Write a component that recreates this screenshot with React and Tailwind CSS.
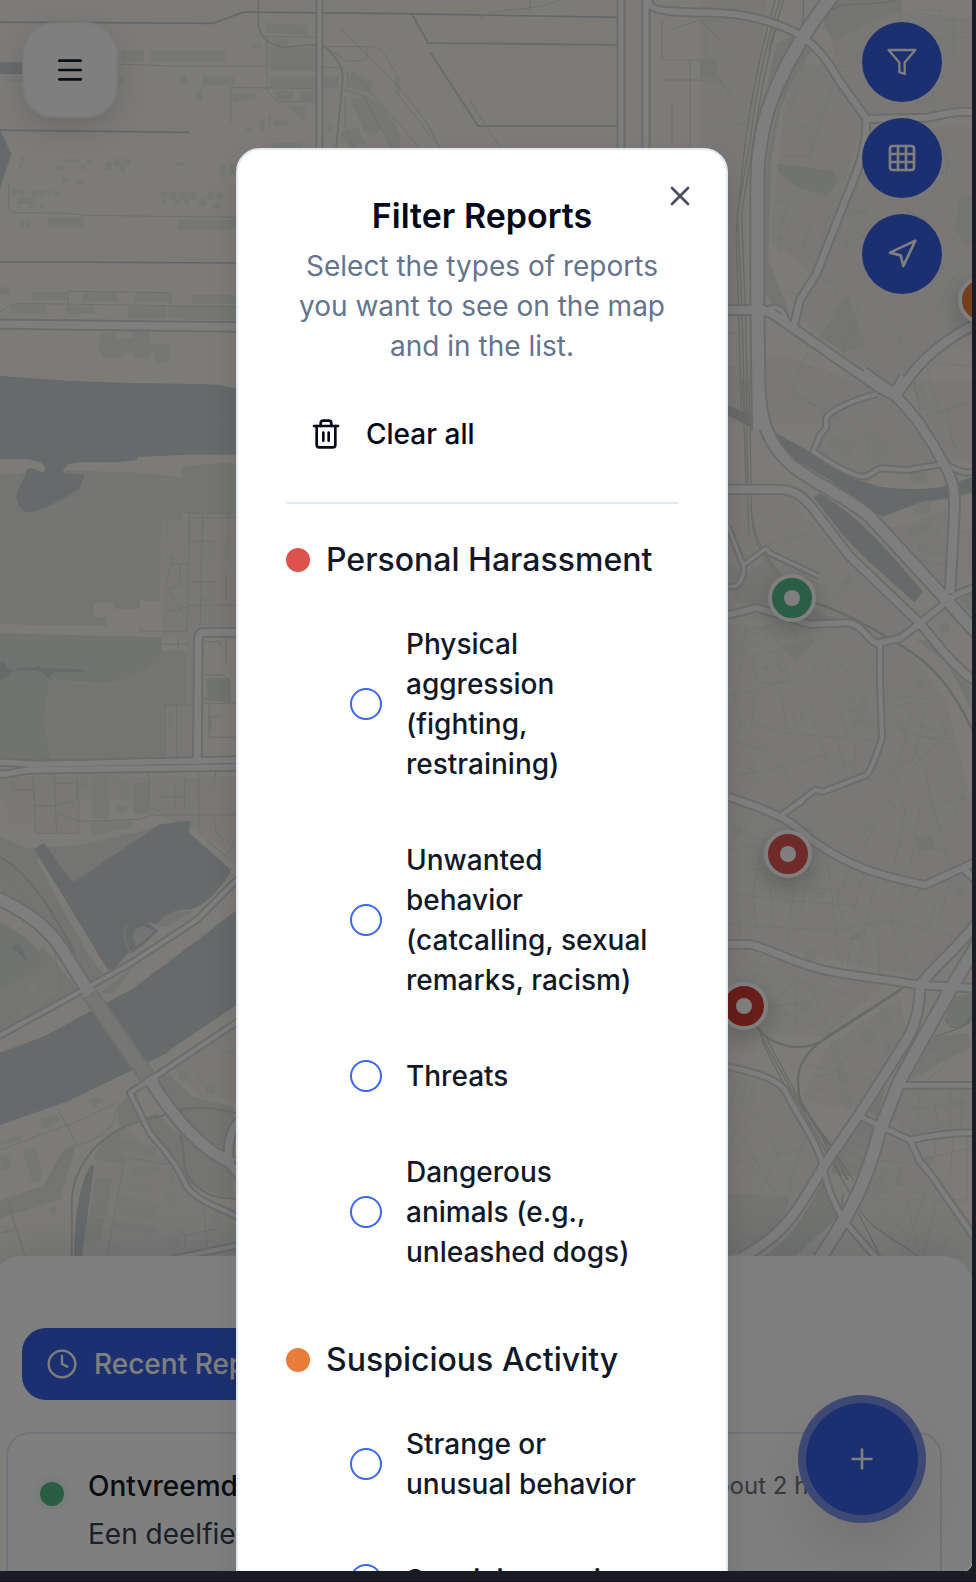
import { Clock, Grid3x3, Menu, Navigation, Plus, Trash2, X } from "lucide-react";

/* Each map tile is drawn in its own coordinates, three units to a pixel. */
const tiles = {
  nw: "translate(0 0) scale(.33333)",
  n: "translate(0 0)",
  ne: "translate(700 0) scale(.33333)",
  w: "translate(0 380) scale(.33333)",
  sw: "translate(0 780) scale(.33333)",
  e: "translate(720 380) scale(.33333)",
  se: "translate(720 800) scale(.33333)",
};

const WATER = "#ccd4d7";
const GREEN = "#e8eae4";
const PARK = "#e1e6e0";
const URBAN = "#f2f1ed";
const BUILDING = "#ececea";

const areas = [
  ["nw", WATER, "M-30 187H70V222H-30Z M-30 392H2L34 462L0 565H-30Z M-30 1128H0C100 1140 250 1145 400 1150L650 1155L710 1168V1260H-30Z"],
  ["ne", URBAN, "M0 0H200L170 300L110 640V930H0Z M300 190L440 200L490 360L430 560L340 820L210 720L250 330Z M400 110L600 30L840 60V340L500 345L400 200Z M500 380H840V950L590 1170L300 960L340 840Z M230 1060L560 1180L640 1270H84V1100Z"],
  ["ne", GREEN, "M390 0H605V30L570 45L480 80L400 125L370 75Z M310 120L340 140L270 260L240 330L215 480L205 780L265 930L250 960L195 880V600C195 450 230 300 310 120Z M0 180H50V235H0Z M840 580L780 590L765 690L800 735H840Z M230 130L290 100L200 260Z M440 880L498 1040L430 1058L360 1010Z"],
  ["ne", PARK, "M230 490L400 512L416 540L380 588L290 560L232 515Z"],
  ["w", GREEN, "M-30 285L190 272L390 276L545 292V262L640 250H710V398H548V420H484L480 662H420V686H340V670H282V711H320V738L-30 732Z M-30 760L485 772V813H560L575 1135L-30 1140Z"],
  ["w", "#ebece7", "M-30 290L190 275L390 280L470 290L505 305C470 340 460 380 430 405C400 430 350 425 320 390C290 355 240 360 180 410L90 540L60 600V732H-30Z"],
  ["w", URBAN, "M484 420H548L568 400H710V735L600 740L575 1135H494V980H560V780L484 770Z M0 1190H710V1260H0Z"],
  ["w", PARK, "M-30 760L485 772V813L440 862C380 900 330 915 260 905L150 900C150 950 130 1000 140 1060L160 1140H-30Z M620 895H690V962H620Z"],
  ["w", WATER, "M-30 -12H0L240 5C400 10 640 12 650 14L710 26V224H560L415 231L410 240L350 247H240L205 252L188 272L195 280L254 284L238 328C200 350 150 380 100 396C70 400 55 385 48 350C50 335 70 300 82 268C95 262 110 268 125 277L135 272C137 258 130 250 115 245L80 237H-30Z"],
  ["w", WATER, "M10 843L30 872L80 860L104 864L112 855L125 864L240 868L262 875L160 877L146 898L130 880L100 870L40 872L20 890L0 905V850Z"],
  ["sw", URBAN, "M100 0H235V160H104Z M450 0H710V240L600 150L450 100Z M0 10H100V130H30Z M370 1040L500 1140L560 1240L710 1320V1430H240L290 1150Z M520 860L710 740V960L600 950Z"],
  ["sw", GREEN, "M0 168L80 205L240 195L400 160L530 123H575L560 160L240 340L130 190L110 240L250 500L310 580L240 625C180 500 120 430 0 330Z M400 10H448V100H400Z M0 720V770L240 640L180 560L130 500L0 600Z M300 640L400 560L340 640Z M480 860L580 950L700 980V1110L620 1090L540 1000L460 900Z M350 980L410 940L450 1060C480 1090 540 1150 560 1210L700 1260V1170C600 1110 530 1060 470 1000L400 1030C330 1050 290 1100 280 1140L370 1150L360 1060Z M0 1270L130 1220L190 1110L230 1090L180 1260L0 1315Z M440 430L520 390L580 395L500 440Z"],
  ["sw", PARK, "M-30 425H0C60 455 110 495 135 545L90 580L10 625L-30 640Z"],
  ["sw", GREEN, "M285 1195H335L322 1305L270 1310Z M265 1308L315 1315L300 1380L255 1385Z"],
  ["sw", WATER, "M102 208L132 188L212 300L225 304L480 133L570 122L568 158L693 270L690 280C650 340 610 380 570 390C530 386 500 395 470 432L440 425L475 452L430 495L400 516L385 520L340 568L322 568L175 325Z M35 500L58 492L82 542Z M275 1152L282 1160L246 1430H222C225 1300 240 1200 275 1152Z"],
  ["sw", WATER, "M-30 830L0 818L130 770L400 625L620 460L710 390V675L515 806L500 820L440 850L200 965L0 1035L-30 1045Z"],
  ["sw", GREEN, "M398 470Q400 440 430 440Q450 442 462 456L435 478L408 500Z"],
  ["e", URBAN, "M24 340L200 340L390 560L590 740L480 800L300 740L24 720Z M24 730L270 740L400 740L470 795L560 800L680 960L740 1200V1330H24Z M330 100L470 50L520 60L650 240L480 270L430 285L290 215Z M560 0H770V250L690 240Z M540 440L690 380V620L660 640L490 440Z"],
  ["e", GREEN, "M24 560L70 560L60 610L24 620Z M50 600L150 530L190 650L110 680L40 660Z M250 680L380 725L270 730Z M590 780L680 850L760 1000V930L620 780Z M180 800L300 770L230 850Z M720 660L768 720V620Z"],
  ["e", WATER, "M24 75L104 112V148L24 106Z M155 152L270 215C340 270 400 300 480 320C560 330 640 330 680 316L768 288V335L680 356C640 362 620 362 600 368L490 410C460 400 380 340 330 300L210 230Z M280 352L300 340C400 400 480 480 608 635L583 667C500 590 400 510 350 440Z M225 318L262 342L255 350L222 328Z"],
  ["se", URBAN, "M24 0H768V180L615 240L400 190L200 60Z M24 50L180 60L270 130L610 260L768 200V360L600 530L24 420Z M24 440L500 550L310 710L130 700L24 500Z M24 820L180 860L300 1100L180 1300L24 1340Z M550 870H768V990L570 1010L520 960Z M480 1010L570 1030L768 1340V1380H560L420 1230Z M320 740L540 590L560 700L400 930L240 900Z"],
  ["se", GREEN, "M640 710L740 700L760 740L640 800L570 840Z M24 1180L210 1190L180 1300L24 1370Z M500 870H550L520 970Z M440 925L500 860L470 960Z M380 420L440 380L420 420Z M330 1120L400 950L470 985L420 1130Z M590 110H640V150H590Z"],
  ["se", PARK, "M310 1140L355 1250L220 1375H120C200 1330 240 1270 310 1140Z M675 655L700 590L768 580V640C750 690 690 700 675 655Z"],
];

const buildings = [
  ["nw", "M363 152H432V185H363Z M452 152H676V186H452Z M606 230H702V255H606Z M540 225H560V252H540Z M588 270H607V302H588Z M812 146H947V212H812Z M810 230H1016V262H810Z M798 68L924 76V104L798 98Z M820 115H862V138H820Z M830 270H880V300H830Z M902 272H942V302H902Z M858 316L915 318V362L890 345Z M820 362H866V378H820Z M818 428H907V445H818Z M697 282L760 280L772 296L700 305Z M1055 212L1118 245L1112 280L1045 262Z M1050 300L1100 288L1150 320L1170 360L1120 410L1090 390Z M1140 370L1175 360L1200 400V445H1170Z M1020 400L1070 380L1100 430L1050 445Z M145 652H250V682H145Z M534 659H710V690H534Z M93 876H198V901H93Z M248 879H353V904H248Z M403 880H512V906H403Z M34 914H136V940H34Z M205 917H285V942H205Z M385 917H500V956H385Z M505 917H710V960H560L505 950Z M577 885H710V910H577Z M52 592H107V612H52Z M228 544H256V552H228Z M186 532H205V546H186Z M305 1002L345 995V1015H400V995H450V1030L510 1035V1085L465 1090V1060H450V1075H400V1060H370V1075H310L295 1045Z M780 362H795V390H780Z M805 345H812V382H805Z M738 380H756V392H738Z M985 365H997V395H985Z M524 490L552 486V497H524Z M0 862H28V885H0Z M18 237H66V245H18Z M660 496H676V530H660Z M690 490H710V525H690Z M352 232H374V250H352Z M758 132H787V146H758Z M1185 230L1200 240V290L1186 262Z"],
  ["nw", "M341 487a12 12 0 1 0 24 0a12 12 0 1 0-24 0 M369 487a12 12 0 1 0 24 0a12 12 0 1 0-24 0 M314 498a12 12 0 1 0 24 0a12 12 0 1 0-24 0 M359 507a9 9 0 1 0 18 0a9 9 0 1 0-18 0 M505 587a13 13 0 1 0 26 0a13 13 0 1 0-26 0 M535 587a13 13 0 1 0 26 0a13 13 0 1 0-26 0 M565 587a13 13 0 1 0 26 0a13 13 0 1 0-26 0 M483 583a9 9 0 1 0 18 0a9 9 0 1 0-18 0 M483 606a9 9 0 1 0 18 0a9 9 0 1 0-18 0 M596 606a12 12 0 1 0 24 0a12 12 0 1 0-24 0 M619 587a12 12 0 1 0 24 0a12 12 0 1 0-24 0 M648 587a12 12 0 1 0 24 0a12 12 0 1 0-24 0 M638 617a12 12 0 1 0 24 0a12 12 0 1 0-24 0 M523 607a9 9 0 1 0 18 0a9 9 0 1 0-18 0 M552 607a9 9 0 1 0 18 0a9 9 0 1 0-18 0 M93 580a9 9 0 1 0 18 0a9 9 0 1 0-18 0 M116 580a9 9 0 1 0 18 0a9 9 0 1 0-18 0 M139 580a9 9 0 1 0 18 0a9 9 0 1 0-18 0 M162 580a9 9 0 1 0 18 0a9 9 0 1 0-18 0 M34 576a9 9 0 1 0 18 0a9 9 0 1 0-18 0 M56 576a9 9 0 1 0 18 0a9 9 0 1 0-18 0 M192 482a7 7 0 1 0 14 0a7 7 0 1 0-14 0 M209 482a7 7 0 1 0 14 0a7 7 0 1 0-14 0 M225 482a7 7 0 1 0 14 0a7 7 0 1 0-14 0 M164 502a7 7 0 1 0 14 0a7 7 0 1 0-14 0 M181 502a7 7 0 1 0 14 0a7 7 0 1 0-14 0 M242 503a7 7 0 1 0 14 0a7 7 0 1 0-14 0 M62 480a7 7 0 1 0 14 0a7 7 0 1 0-14 0 M55 498a7 7 0 1 0 14 0a7 7 0 1 0-14 0 M260 482a7 7 0 1 0 14 0a7 7 0 1 0-14 0 M82 623a7 7 0 1 0 14 0a7 7 0 1 0-14 0 M98 623a7 7 0 1 0 14 0a7 7 0 1 0-14 0 M48 623a7 7 0 1 0 14 0a7 7 0 1 0-14 0 M120 623a7 7 0 1 0 14 0a7 7 0 1 0-14 0 M60 673a7 9 0 1 0 14 0a7 9 0 1 0-14 0 M78 673a7 9 0 1 0 14 0a7 9 0 1 0-14 0"],
  ["w", "M494 430H505V480H494Z M512 430H523V455H512Z M542 430H552V445H542Z M625 490H634V530H625Z M672 490H680V540H672Z M620 622H627V660H620Z M610 692H635V710H610Z M240 1185H262V1226H240Z M277 1185H327V1260H277Z M340 1190H360V1215H340Z M362 1208H386V1232H362Z M505 990H520V1050H505Z M540 990H550V1035H540Z M625 1010H635V1060H625Z M550 1195H600V1210H550Z"],
  ["sw", "M277 0H327V116H277Z M348 76H380V97H348Z M270 122H400V142L330 155L275 165Z M364 40H388V62H364Z M120 1020L172 1002L180 1025L128 1048Z M68 1110L108 1102L128 1200L98 1212Z M0 1122L28 1130L34 1165L5 1172Z M365 1080L420 1078V1112L368 1118Z M428 1092L470 1100L462 1135L428 1130Z M378 1202L458 1216L452 1240L374 1228Z M358 1246L480 1268L472 1320L350 1302Z M345 1320L468 1342L462 1366L340 1346Z M500 1228L526 1232L520 1278L498 1272Z M506 1160L525 1165L520 1210L505 1205Z M532 882L562 868L572 895L545 910Z M585 870L600 885L610 915L590 890Z M60 680L82 668L86 695L66 712Z M80 620L112 605L118 632L88 640Z M110 650L160 612L168 640L120 680Z M265 960L290 948L310 965L280 980Z M0 1085L66 1066V1078L0 1098Z M148 1282L168 1275L172 1300L152 1308Z M330 1398L360 1400L355 1430H328Z M495 1370L535 1375L540 1410L515 1405Z M390 1155L480 1160V1180L400 1190Z M640 1290L665 1295V1330L640 1325Z M595 1378H615V1400H595Z"],
  ["e", "M560 450L630 420V450L560 470Z M570 275H620V312L575 310Z M580 380L630 360L636 395L580 410Z M345 165L410 190L380 230L325 195Z M455 185L515 190L510 220L475 245L455 220Z M580 900L595 885L618 915L602 930Z M655 740L680 725L690 750L665 765Z M240 990H254V1030H240Z M590 500L610 480L640 510L600 520Z M380 580L410 600L380 630L360 610Z M640 455L655 445V480H645Z M205 85L215 78L222 88L212 95Z M310 110L350 95L360 120L320 140Z M380 950L405 940L410 965L385 975Z M420 945L440 940L445 965L425 970Z M380 985L440 970L445 995L385 1005Z M390 1020L440 1005L445 1030L395 1040Z M130 840L140 838L150 880L140 882Z M165 835L175 832L190 875L180 880Z"],
  ["se", "M390 1000L445 1015L440 1035L388 1020Z M385 1030L435 1048L430 1066L380 1050Z M375 1062L425 1082L420 1100L370 1082Z M40 850L55 846L40 910L28 905Z M65 860L82 858L66 920L54 915Z M90 870L105 868L92 925L80 920Z M470 640L500 620L520 660L490 680Z M420 700L460 680L470 720L430 740Z M240 600L275 605L265 645L235 635Z M30 70L60 65L70 100L40 110Z M705 262L735 255L738 285L708 290Z M350 830L380 810L390 840L360 855Z M610 760L640 750L650 790L620 800Z M280 270L320 275L310 300L280 295Z M600 1080L640 1070L645 1090L610 1100Z M700 900L730 895V925H702Z M450 1150L480 1130L500 1160L470 1180Z M520 1130L550 1120L555 1150L530 1160Z M255 440L290 450L280 500L250 490Z M500 720L515 740L500 765L485 745Z"],
];

/* [tile, stroke, width, path] */
const lines = [
  ["nw", "#c6cfd3", 5, "M-30 66L640 70L730 36L1200 41L1860 52 M-30 390L568 397 M-30 785L710 789"],
  ["nw", "#d8d8d6", 5, "M775 0V70C780 120 820 142 860 142C900 138 940 130 970 138C1010 170 1030 200 1028 240L1008 445"],
  ["nw", "#dededb", 3, "M352 192L520 198L801 199 M690 262L945 266 M692 262V368 M801 110V275L835 306L945 304 M785 108L945 112 M975 140H1120C1150 145 1160 170 1200 245 M1100 142V175Q1080 186 1040 182L980 145 M1035 270L1090 288L1175 445 M1035 290V380L1060 445 M970 200L1025 205C1050 220 1050 240 1035 270 M26 552V628Q28 638 40 638L200 640L260 646L710 652 M0 935L46 910L710 920 M203 942V874L512 878V917"],
  ["n", "#d6d6d4", 2, "M412 14L428 43L622 45 M430 52L478 126H619"],
  ["n", "#dfdfdc", 1, "M478 20C500 4 530 14 560 0 M340 28C370 60 420 100 440 148 M395 90L440 148 M360 80L420 148 M500 148L470 100 M530 0V12 M662 20V60H700 M662 80H720L735 100 M670 30L700 20L720 40 M672 100V148 M690 60V148"],
  ["ne", "#d6d6d3", 4, "M240 0C200 120 170 260 150 430L112 640L125 900L135 1270 M250 0C215 120 185 260 165 390L125 640L135 900L145 1270 M225 0C190 120 160 250 135 430L108 700L115 900L125 1270 M205 150L250 0 M310 0C312 50 310 80 298 100"],
  ["ne", "#d6d6d3", 4, "M590 0C540 15 470 10 430 15C390 20 370 60 340 90"],
  ["ne", "#e2e2df", 2, "M0 372H130L150 340 M60 372V430 M0 60H60L90 50V0 M15 60V180H60L72 150 M0 210L60 240L130 190 M60 240V372 M270 330L310 200L400 235 M290 270L370 300 M255 370L330 385L390 300 M280 415L340 430 M250 470H330V430 M325 480L400 250 M395 110L470 90L490 150L450 200L400 200 M450 130L520 250 M420 180L480 130 M520 100L640 70 M600 0V60 M640 30H720V60H830 M640 90V300 M700 100V330 M740 180V300L640 310 M640 120L830 110 M760 40V180 M720 390L740 480L800 580 M740 480V590L600 540 M510 590L560 700 M530 560L470 700 M560 590L800 740 M650 620L780 690 M430 720L640 1090 M500 730L790 900 M470 700L830 870 M640 700L480 900L430 1060 M700 700L560 940 M760 740L590 1040 M810 740L680 1000 M220 610L330 580L400 600L350 780L260 750 M240 640V760 M270 600L240 690 M300 590L260 700 M350 600L310 740 M220 710L400 760 M400 600L480 640L430 740L500 700 M430 640L510 630 M370 840L420 850L360 980 M250 870L350 900 M320 1060L270 1180L390 1240 M320 1060L400 1130L350 1200 M500 1080L580 1160 M640 1140L660 1240 M680 1100L720 1240L830 1190 M700 1090L830 1100 M84 1000H110V1100H84 M400 1240L470 1200L520 1270"],
  ["w", "#dededb", 3, "M548 400H710 M568 400L562 754H422V742 M608 404L600 742 M568 413H710 M570 484H645 M685 400V540H708 M570 606H645 M564 676H710 M498 525L520 532L498 610L538 685L560 680 M515 552H565 M540 552V612L508 630 M500 680L510 694H530L545 685 M605 660H632 M678 575V660 M610 785H660V800 M678 775V850 M612 885H670L690 900V965L630 960L612 955 M494 976H575 M496 976V1132 M530 978V1132 M610 970H710 M628 965V1072H710 M660 1010H632 M490 793H565 M534 775V810 M36 1190V1230H100 M101 1185V1260 M163 1180V1210H230 M230 1182V1260 M446 1178V1260 M596 1165V1260 M650 1165L640 1220"],
  ["w", "#ecefe8", 5, "M160 895C200 915 260 905 330 916C380 910 430 880 475 862 M150 900C150 950 130 1000 140 1060L160 1140"],
  ["w", "#d2d9db", 2, "M0 118L150 122L350 114L700 122"],
  ["sw", "#dededb", 3, "M100 0L106 160H236V0 M163 0L170 160 M104 78H165L230 58 M170 98L236 124L420 118L450 105H710 M446 10V80L480 95 M480 50H566 M554 0V85 M524 18V82 M596 0V140C600 170 640 200 710 250 M640 110L650 160L700 195L680 225 M0 1110L200 1035L178 995 M200 1035L225 1085 M200 1040L350 968 M0 1265L125 1222C170 1180 170 1120 230 1098C330 1060 340 1040 345 1000C350 980 370 965 390 950 M22 1262L75 1430 M0 1360L45 1348 M320 1430L375 1132L500 1152L515 1140 M610 1280L622 1400 M535 1350L555 1368L655 1345 M555 1368V1400 M622 920H638V935H622Z M675 820L710 800"],
  ["sw", "#d6d6d3", 6, "M215 1430V1260C225 1130 330 1030 480 1010C560 970 640 980 710 1000 M0 230C100 290 160 400 225 520 M540 1060C560 1130 540 1170 580 1210C620 1250 660 1255 710 1256"],
  ["sw", "#e3e6e0", 5, "M380 435C370 460 372 490 395 520 M162 365L240 480L270 570 M0 240C30 310 100 380 150 440L185 640"],
  ["sw", "#dce2e3", 2, "M0 858L105 995"],
  ["e", "#d6d6d3", 4, "M68 0L78 310 M78 0L86 465 M88 0L94 380C95 460 110 520 180 590 M92 380C100 460 120 520 190 590"],
  ["e", "#d2d2d0", 7, "M180 590L290 670C380 700 450 740 540 795C640 850 700 930 768 1070"],
  ["e", "#e1e1de", 2, "M240 0L215 35L310 90L340 60 M320 100L460 180H560L620 150 M460 180L520 60 M400 90L455 170 M445 185V225L480 260 M380 60L400 110 M580 0L610 110L768 60 M600 0L620 80 M680 90L700 200L768 150 M690 180L740 230 M540 430L620 520H690 M490 445L600 540L690 560 M720 450L750 460V560L768 600 M110 470L190 400L210 380 M120 500L270 460 M150 540L240 430 M190 560L310 480 M220 590L330 500 M270 600L360 520 M350 660L390 590L470 640L420 730 M230 580L350 640L300 720 M24 770L200 720 M24 800L150 740 M24 830L210 745 M60 870L80 730 M100 830L110 910L210 905L180 810L90 830 M110 870L190 850 M120 700L180 790 M200 720L290 880 M250 740L330 870 M300 760L400 900 M350 740L450 860 M290 910L400 830 M330 950L480 850 M350 950L380 1060L470 1030 M24 950L110 930L330 860 M40 930L60 1040 M24 1010L200 1060L470 1080 M110 930L90 1060L160 1130 M180 910L200 1060 M210 960L230 1040 M270 960L290 1060 M24 1080L130 1110L210 1200 M80 1140L170 1300 M120 1130L60 1200 M170 1130L230 1250 M24 1190L150 1170L330 1120L430 1180 M300 1070L330 1190 M350 1070L380 1190 M410 1080L400 1180 M500 960L560 950L640 960 M500 980L580 970L560 1060L530 1170 M500 1030L700 1100 M520 1000L620 1180L700 1120 M540 900L570 950 M620 970L580 1140L520 1160 M640 970L680 1060L560 1180 M600 1040L700 1060 M600 1070L710 1080 M440 1185L530 1290 M480 1140L600 1280L768 1250 M520 1160L560 1310 M620 1180L640 1310 M640 1160L740 1220L700 1310 M650 1200L768 1280"],
  ["se", "#e1e1de", 2, "M24 80L130 120L100 270 M24 150L140 130 M60 40L150 250L230 260 M130 120L240 100 M90 210L240 190 M24 280L200 300L440 320 M100 280L110 390 M50 290L60 400 M150 250L160 380 M230 190L200 440 M230 260L350 270L430 240 M280 130L230 400 M320 160L350 410 M350 270L370 380 M24 370L100 380L360 390 M390 200L350 300 M430 220L400 340 M470 230L440 360 M360 390L510 360L700 410 M510 365L590 540 M440 370L420 500 M400 400L380 500 M470 370L480 520 M560 250L510 365 M600 260L540 380 M660 280L620 400 M690 240L650 390 M530 380L680 480 M340 430L370 500 M330 100L390 130L460 80 M400 30L450 90L560 130 M480 40L430 150 M500 0L600 130L700 160 M560 20L520 210 M600 30L570 210 M640 20L690 200 M620 60L768 120 M280 10L400 80 M60 470L130 500L230 540L410 590 M130 500L40 600 M227 540L230 700 M227 540L150 620L240 610 M260 540L330 690 M410 590L330 690 M100 600L330 700 M24 560L200 660 M330 720L385 930 M345 720L395 930 M250 790L490 850 M270 830L350 820L380 760 M280 860L400 910 M360 740L500 830 M24 980L140 940L250 1000 M50 980L24 1060 M60 1000L190 1230 M130 960L220 1180 M200 1000L110 1200 M24 1090L300 1040 M24 1150L100 1100L220 1240 M260 1000L160 1300 M550 940L580 1000 M560 900L640 980L740 950 M600 880L590 1000 M640 890L660 1000 M690 870V990 M730 870L720 990 M560 930L768 900 M600 830L660 770 M620 840L690 790 M590 810L640 850 M600 1080L768 1040 M640 1010L650 1090 M700 1000L690 1130L650 1160 M740 1000V1200 M460 1190L540 1150L600 1180 M440 1200L768 1200 M470 1080L560 1090 M500 1100L490 1150 M540 1100L530 1160 M480 1220L620 1370 M560 1200L600 1370 M620 1170L560 1330 M650 1200L610 1370 M560 1330L730 1230 M700 1200L768 1290 M700 1300L650 1370 M400 1140L440 1200 M430 1150L500 1120 M24 1330L200 1290"],
  ["se", "#d2d2d0", 7, "M110 680C150 740 250 760 310 720L545 568 M310 720C220 780 230 850 240 900L300 1000L340 1050"],
  ["se", "#d2d2d0", 4, "M315 712L550 562 M120 700L230 900L390 1180 M135 705L240 905L300 1000L365 1130 M125 720L190 850 M230 900L330 1030L380 1140 M245 910L400 1140 M330 1040L385 1140 M360 1250L370 1180 M420 1230C460 1300 540 1320 600 1375 M415 1240L485 1375"],
  ["se", "#d6d6d3", 4, "M640 710C700 690 740 690 768 640 M675 655C690 700 745 690 752 640"],
];

/* [tile, width of the carriageway, path] */
const roads = [
  ["nw", 12, "M958 -10V450"],
  ["nw", 22, "M-30 972L710 981"],
  ["n", 5, "M650 -5C645 8 655 10 672 11L702 13 M646 0V148 M621 0V148"],
  ["ne", 18, "M-100 34L0 38C100 36 200 50 300 105C380 160 400 220 430 260L500 357L680 353C730 345 780 325 840 342"],
  ["ne", 18, "M499 360C500 450 470 520 440 590L350 820L300 900L282 975"],
  ["ne", 12, "M200 930Q245 905 260 965"],
  ["ne", 24, "M84 930H190L215 940L540 1165L590 1190L665 1275"],
  ["ne", 24, "M590 1185C640 1110 690 1040 840 965"],
  ["ne", 36, "M395 -10C330 70 270 170 230 260C190 350 172 450 172 560V920L177 1290"],
  ["w", 20, "M720 757H615Q596 757 595 776L592 1150"],
  ["w", 16, "M-30 1147H20L100 1153L710 1140"],
  ["w", 16, "M-30 1182H20L90 1170L710 1161"],
  ["sw", 12, "M-30 783L240 635L400 545L590 420L720 290"],
  ["sw", 12, "M720 720L480 880L390 938L450 1060C500 1120 530 1150 560 1220C600 1270 660 1280 720 1315"],
  ["sw", 12, "M520 1436L720 1395"],
  ["sw", 22, "M688 1150C680 1100 690 1050 720 1020 M688 1150L720 1190"],
  ["sw", 34, "M-30 345C100 400 160 460 200 530L262 630"],
  ["sw", 32, "M450 900C520 1010 600 1110 700 1150"],
  ["e", 12, "M470 42C400 60 330 90 318 115V145L300 165L280 215C330 250 400 290 430 290C455 290 460 265 490 265L560 270L670 252C710 265 720 285 768 275"],
  ["e", 10, "M24 440L70 555L138 505L150 520L295 588 M70 555C75 580 60 620 40 620H24"],
  ["e", 16, "M24 705L110 683L270 733L385 728C430 735 440 780 470 790L540 775L600 730L680 665C710 635 740 635 768 620"],
  ["e", 12, "M480 790V900L486 1075C470 1120 460 1160 440 1185L310 1235L285 1230L185 1305"],
  ["e", 22, "M24 328H180C220 330 240 345 270 375L390 530L600 730C650 790 700 860 768 905"],
  ["e", 20, "M520 40L550 -10"],
  ["e", 26, "M430 -25L520 40C580 100 630 170 670 250C710 310 703 360 703 400L690 640"],
  ["e", 32, "M115 -20C118 120 140 190 220 260C300 320 380 350 450 410L680 660L770 760"],
  ["se", 18, "M24 -10L110 20L180 50C220 70 240 90 275 120C400 210 500 230 615 255L768 185 M730 205L768 240"],
  ["se", 12, "M185 45L250 0"],
  ["se", 20, "M24 433H90C160 450 240 500 360 520L500 540L600 555L768 565"],
  ["se", 14, "M24 800C120 820 170 840 195 870C250 980 290 1020 310 1100C320 1170 350 1220 370 1260L470 1375"],
  ["se", 14, "M535 856H768"],
  ["se", 14, "M420 950L570 1020C640 1005 700 998 768 998 M570 1020L600 1085L630 1120L768 1320"],
  ["se", 26, "M768 370C720 440 650 490 600 555C600 620 590 670 560 720L420 940L310 1100C220 1260 180 1310 60 1375"],
  ["se", 34, "M780 420L690 570L540 840L480 990C430 1180 380 1250 300 1375"],
];

function CityMap() {
  return (
    <svg
      className="absolute inset-0 h-full w-full"
      viewBox="-10 0 984 1571"
      preserveAspectRatio="xMidYMin slice"
      fill="none"
      strokeLinejoin="round"
      aria-hidden="true"
    >
      <rect x="-10" width="1000" height="1600" fill="#f8f6f1" />
      {areas.map(([tile, fill, d], i) => (
        <path key={i} transform={tiles[tile]} fill={fill} d={d} />
      ))}
      {buildings.map(([tile, d], i) => (
        <path key={i} transform={tiles[tile]} fill={BUILDING} d={d} />
      ))}
      {lines.map(([tile, stroke, width, d], i) => (
        <path key={i} transform={tiles[tile]} stroke={stroke} strokeWidth={width} d={d} />
      ))}
      {roads.map(([tile, width, d], i) => (
        <path key={i} transform={tiles[tile]} stroke="#d8d8d6" strokeWidth={tile === "n" ? width + 4 : width + 12} d={d} />
      ))}
      {roads.map(([tile, width, d], i) => (
        <path key={i} transform={tiles[tile]} stroke="#fdfdfd" strokeWidth={width} d={d} />
      ))}
      <g transform={tiles.sw}>
        <path d="M268 640L445 895" stroke="#e0e0de" strokeWidth="52" />
        <path d="M272 646L440 888" stroke="#ededeb" strokeWidth="40" />
        <path d="M255 620L270 642 M448 893L462 912" stroke="#fdfdfd" strokeWidth="34" />
        <path d="M420 920L500 867" stroke="#fdfdfd" strokeWidth="12" />
      </g>
    </svg>
  );
}

function Marker({ label, className }) {
  return (
    <button
      type="button"
      aria-label={label}
      className={`absolute flex size-12 items-center justify-center rounded-full border-4 border-white shadow-[0_8px_24px_rgba(0,0,0,0.22)] ${className}`}
    >
      <span className="size-4 rounded-full bg-white" />
    </button>
  );
}

function FunnelIcon() {
  return (
    <svg className="size-8" viewBox="0 0 24 24" fill="none" stroke="currentColor" strokeWidth="1.75" strokeLinejoin="round" aria-hidden="true">
      <path d="M22 3H2l8 9.46V19.6l4 1.4v-8.54Z" />
    </svg>
  );
}

function MapButton({ label, children }) {
  return (
    <button type="button" aria-label={label} className="flex size-20 items-center justify-center rounded-full bg-[#3861e2] text-white">
      {children}
    </button>
  );
}

const categories = [
  {
    name: "Personal Harassment",
    dot: "bg-[#de524c]",
    types: [
      "Physical aggression (fighting, restraining)",
      "Unwanted behavior (catcalling, sexual remarks, racism)",
      "Threats",
      "Dangerous animals (e.g., unleashed dogs)",
    ],
  },
  {
    name: "Suspicious Activity",
    dot: "bg-[#e87c38]",
    types: ["Strange or unusual behavior", "Suspicious noises"],
  },
];

function Category({ name, dot, types }) {
  return (
    <fieldset>
      <legend className="flex items-center gap-4 text-[32px] leading-[48px] font-medium whitespace-nowrap text-[#111827]">
        <span className={`size-6 shrink-0 rounded-full ${dot}`} />
        {name}
      </legend>
      <div className="flex flex-col gap-14 pt-10 pr-6 pl-16">
        {types.map((type) => (
          <label key={type} className="flex items-center gap-6 text-[28px] leading-10 font-medium text-[#111827]">
            <input
              type="checkbox"
              className="size-8 shrink-0 appearance-none rounded-full border-2 border-[#3b66ea] bg-white checked:bg-[#3b66ea]"
            />
            {type}
          </label>
        ))}
      </div>
    </fieldset>
  );
}

function ReportsSheet() {
  return (
    <section className="absolute inset-x-0 bottom-0 h-[315px] overflow-hidden rounded-t-[32px] bg-white px-4 pt-18 shadow-[0_-8px_48px_rgba(15,40,70,0.12)]">
      <div className="px-4">
        <button type="button" className="flex h-18 items-center gap-4 rounded-3xl bg-[#3861e2] px-6 text-[28px] font-medium whitespace-nowrap text-white">
          <Clock className="size-8" strokeWidth={1.75} />
          Recent Reports
        </button>
      </div>
      <article className="mt-8 mr-4 flex h-60 gap-6 rounded-3xl border-2 border-[#e2e8f0] px-8 pt-8">
        <span className="mt-4 size-6 shrink-0 rounded-full bg-[#56ba86] shadow-[0_0_12px_rgba(86,186,134,0.3)]" />
        <div className="min-w-0 flex-1">
          <div className="flex items-center justify-between">
            <h3 className="text-[28px] leading-10 font-medium text-[#111827]">Ontvreemding</h3>
            <time className="text-2xl leading-10 text-[#6b7280]">about 2 hours ago</time>
          </div>
          <p className="mt-2 text-[28px] leading-10 text-[#374151]">Een deelfiets</p>
        </div>
      </article>
    </section>
  );
}

function FilterDialog() {
  return (
    <div
      role="dialog"
      aria-modal="true"
      aria-labelledby="filter-title"
      aria-describedby="filter-description"
      className="relative w-[492px] max-w-full rounded-t-3xl border-2 border-[#e2e8f0] bg-white p-12 shadow-[0_16px_30px_rgba(0,0,0,0.12)]"
    >
      <button type="button" aria-label="Close" className="absolute top-[30px] right-[30px] text-[#4d515c]">
        <X className="size-8" strokeWidth={2} />
      </button>
      <header className="flex flex-col gap-3 text-center">
        <h2 id="filter-title" className="text-[34px] leading-9 font-semibold text-[#020817]">Filter Reports</h2>
        <p id="filter-description" className="text-[28px] leading-10 text-[#64748b]">
          Select the types of reports you want to see on the map and in the list.
        </p>
      </header>
      <button type="button" className="mt-8 flex h-18 items-center gap-6 px-6 text-[28px] font-medium text-[#020817]">
        <Trash2 className="size-8" strokeWidth={2} />
        Clear all
      </button>
      <hr className="mt-8 border-t-2 border-[#e2e8f0]" />
      <form className="mt-8 flex flex-col gap-16">
        {categories.map((category) => (
          <Category key={category.name} {...category} />
        ))}
      </form>
    </div>
  );
}

export default function App() {
  return (
    <div className="h-screen overflow-hidden border-b border-[#150f1e] bg-[#191c24] pr-1 pb-2.5 font-[Inter,sans-serif] antialiased">
      <div className="h-full overflow-hidden rounded-br-lg bg-[#7f7f7f]">
        <main className="relative -mr-0.5 -ml-2.5 h-full overflow-hidden">
          <CityMap />
          <Marker label="Report, resolved" className="top-[574px] right-[158px] bg-[#56be8a]" />
          <Marker label="Report, harassment" className="top-[830px] right-[162px] bg-[#de5454]" />
          <Marker label="Report, threat" className="top-[982px] right-[206px] bg-[#d03c34]" />
          <Marker label="Report, suspicious" className="top-[276px] -right-8 bg-[#ea7a38]" />
          <div className="absolute inset-x-0 top-0 flex items-start justify-between px-8 pt-[22px]">
            <button type="button" aria-label="Menu" className="flex size-24 items-center justify-center rounded-[32px] border-2 border-[#f3f3f3] bg-white text-[#111827] shadow-[0_10px_30px_rgba(0,0,0,0.13)]">
              <Menu className="size-8" strokeWidth={2} />
            </button>
            <nav aria-label="Map tools" className="flex flex-col gap-4">
              <MapButton label="Filter">
                <FunnelIcon />
              </MapButton>
              <MapButton label="Map layers">
                <Grid3x3 className="size-8" strokeWidth={2} />
              </MapButton>
              <MapButton label="My location">
                <Navigation className="size-8" strokeWidth={2} />
              </MapButton>
            </nav>
          </div>
          <ReportsSheet />
          <button type="button" aria-label="New report" className="absolute right-14 bottom-14 flex size-28 items-center justify-center rounded-full bg-[#3861e2] text-white shadow-[0_0_0_8px_#7a90e8,0_30px_80px_rgba(0,0,0,0.15)]">
            <Plus className="size-8" strokeWidth={2} />
          </button>
          <div className="absolute inset-0 flex items-start justify-center overflow-hidden bg-black/50 pt-[148px]">
            <FilterDialog />
          </div>
        </main>
      </div>
    </div>
  );
}
